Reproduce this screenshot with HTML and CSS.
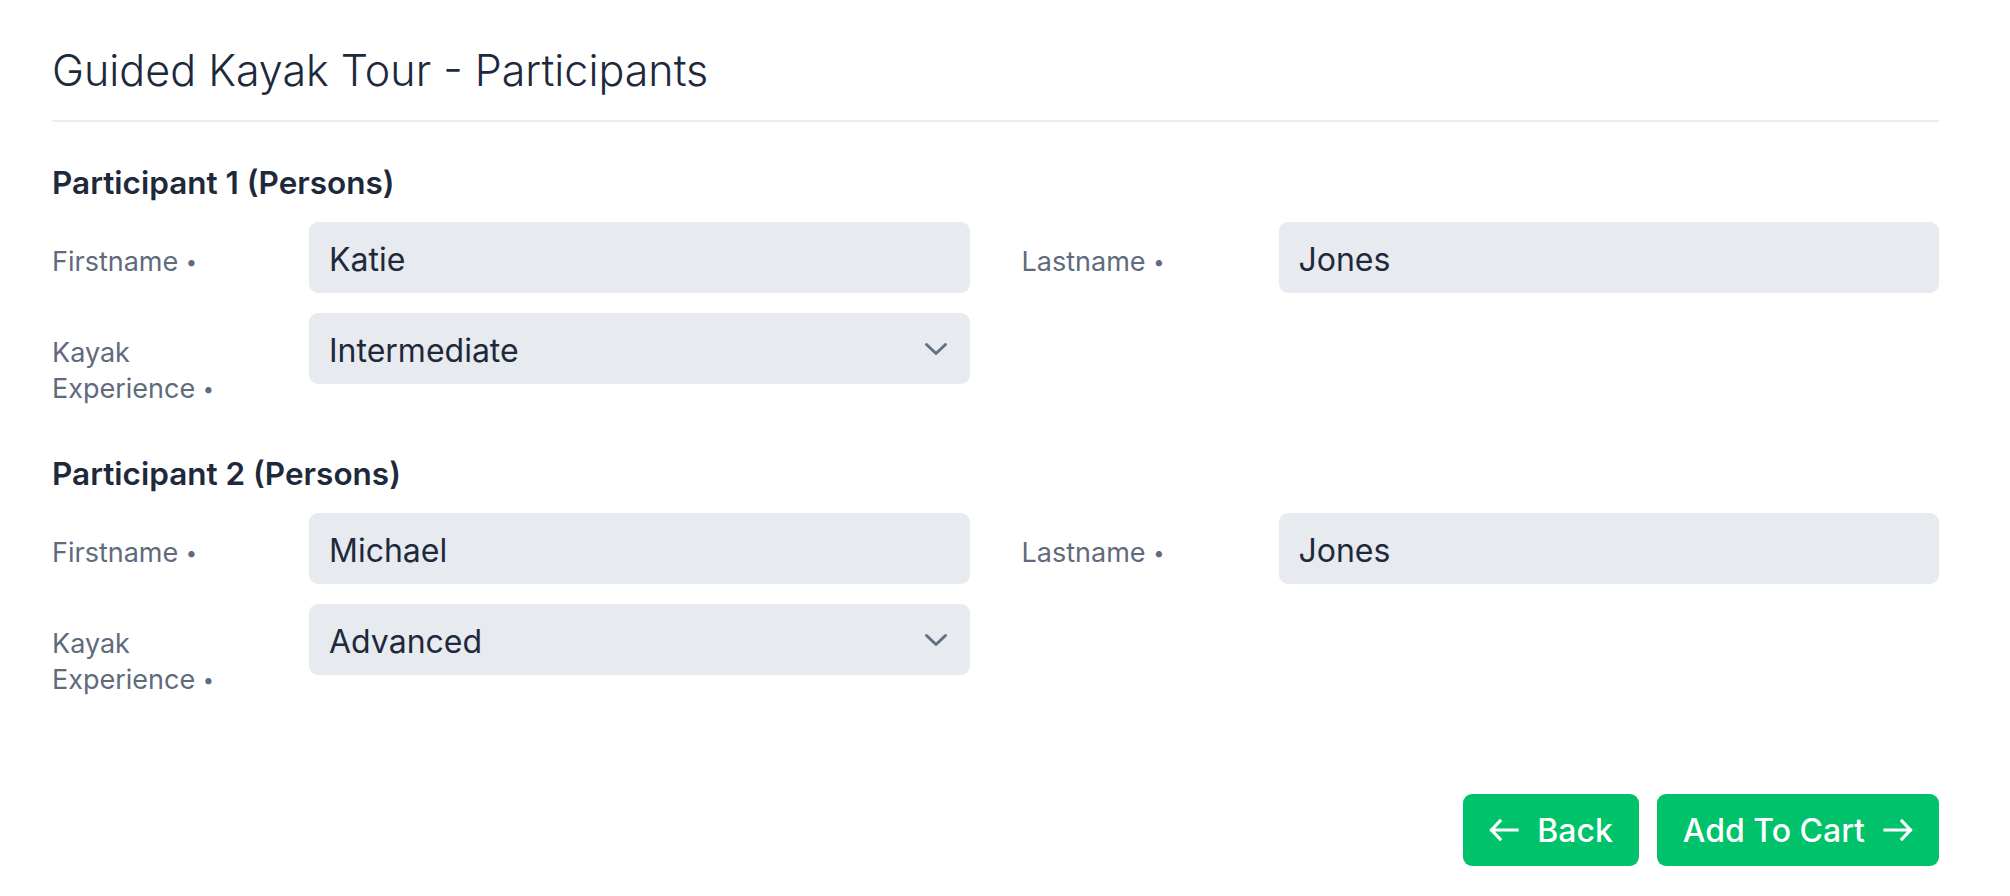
FILE: index.html
```html
<!DOCTYPE html>
<html lang="en">
<head>
<meta charset="utf-8">
<title>Guided Kayak Tour - Participants</title>
<link rel="stylesheet" href="styles.css">
</head>
<body>
<main class="page">
  <h1 class="title">Guided Kayak Tour - Participants</h1>

  <section class="participant">
    <h2 class="participant-title">Participant 1 (Persons)</h2>
    <div class="fields">
      <div class="field">
        <label class="field-label">Firstname <span class="req">•</span></label>
        <input class="control" type="text" value="Katie">
      </div>
      <div class="field">
        <label class="field-label">Lastname <span class="req">•</span></label>
        <input class="control" type="text" value="Jones">
      </div>
      <div class="field">
        <label class="field-label">Kayak<br>Experience <span class="req">•</span></label>
        <div class="control select">
          <span>Intermediate</span>
          <svg class="chevron" width="24" height="14" viewBox="0 0 24 14"><path d="M2.5 2.5l9.5 9 9.5-9" fill="none" stroke="currentColor" stroke-width="3" stroke-linecap="round" stroke-linejoin="round"/></svg>
        </div>
      </div>
    </div>
  </section>

  <section class="participant">
    <h2 class="participant-title">Participant 2 (Persons)</h2>
    <div class="fields">
      <div class="field">
        <label class="field-label">Firstname <span class="req">•</span></label>
        <input class="control" type="text" value="Michael">
      </div>
      <div class="field">
        <label class="field-label">Lastname <span class="req">•</span></label>
        <input class="control" type="text" value="Jones">
      </div>
      <div class="field">
        <label class="field-label">Kayak<br>Experience <span class="req">•</span></label>
        <div class="control select">
          <span>Advanced</span>
          <svg class="chevron" width="24" height="14" viewBox="0 0 24 14"><path d="M2.5 2.5l9.5 9 9.5-9" fill="none" stroke="currentColor" stroke-width="3" stroke-linecap="round" stroke-linejoin="round"/></svg>
        </div>
      </div>
    </div>
  </section>

  <div class="actions">
    <button class="btn" type="button">
      <svg class="arrow" width="30" height="24" viewBox="0 0 30 24"><path d="M11 3L2.5 12L11 21M2.5 12H28" fill="none" stroke="currentColor" stroke-width="3.2" stroke-linecap="square" stroke-linejoin="miter"/></svg>
      <span>Back</span>
    </button>
    <button class="btn" type="button">
      <span>Add To Cart</span>
      <svg class="arrow" width="30" height="24" viewBox="0 0 30 24"><path d="M19 3L27.5 12L19 21M27.5 12H2" fill="none" stroke="currentColor" stroke-width="3.2" stroke-linecap="square" stroke-linejoin="miter"/></svg>
    </button>
  </div>
</main>
</body>
</html>
```

FILE: styles.css
```css
* {
  box-sizing: border-box;
}

html, body {
  margin: 0;
  background: #ffffff;
}

body {
  font-family: Inter, "Noto Sans", "Liberation Sans", sans-serif;
  color: #1e293b;
}

.page {
  padding: 0 71px 0 52px;
}

.title {
  margin: 0;
  padding: 44px 0 24px;
  font-size: 43px;
  line-height: 52px;
  font-weight: 300;
  color: #1e293b;
  border-bottom: 2px solid #ececef;
}

.participant {
  margin-top: 41px;
}

.participant + .participant {
  margin-top: 47px;
}

.participant-title {
  margin: 0 0 19px;
  font-size: 31.5px;
  line-height: 40px;
  font-weight: 600;
  color: #1e293b;
}

.fields {
  display: grid;
  grid-template-columns: 1fr 1fr;
  column-gap: 52px;
  row-gap: 20px;
}

.field {
  display: flex;
  align-items: flex-start;
}

.field-label {
  flex: 0 0 257px;
  padding-top: 22px;
  font-size: 27px;
  line-height: 36px;
  font-weight: 400;
  color: #5f6b7c;
}

.req {
  font-size: 20px;
  vertical-align: 2px;
}

.control {
  flex: 1 1 auto;
  min-width: 0;
  height: 71px;
  margin: 0;
  padding: 3px 24px 0 20px;
  border: none;
  border-radius: 9px;
  background: #e7eaee;
  font-family: inherit;
  font-size: 32px;
  font-weight: 400;
  color: #1e293b;
  outline: none;
}

.select {
  display: flex;
  align-items: center;
  justify-content: space-between;
  padding-right: 22px;
}

.chevron {
  color: #647084;
  margin-top: -2px;
}

.actions {
  display: flex;
  justify-content: flex-end;
  gap: 18px;
  margin-top: 96px;
}

.btn {
  display: flex;
  align-items: center;
  gap: 18px;
  height: 72px;
  padding: 0 26px;
  border: none;
  border-radius: 9px;
  background: #00c26a;
  color: #ffffff;
  font-family: inherit;
  font-size: 32px;
  font-weight: 500;
  cursor: pointer;
}

.arrow {
  display: block;
}
```
